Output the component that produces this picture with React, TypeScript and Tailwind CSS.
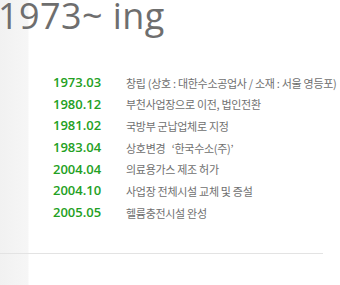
const HISTORY = [
  { date: '1973.03', text: '창립 (상호 : 대한수소공업사 / 소재 : 서울 영등포)' },
  { date: '1980.12', text: '부천사업장으로 이전, 법인전환' },
  { date: '1981.02', text: '국방부 군납업체로 지정' },
  { date: '1983.04', text: '상호변경\u00a0\u00a0 ‘한국수소(주)’' },
  { date: '2004.04', text: '의료용가스 제조 허가' },
  { date: '2004.10', text: '사업장 전체시설 교체 및 증설' },
  { date: '2005.05', text: '헬륨충전시설 완성' },
];

export default function App() {
  return (
    <div className="w-[340px] h-[285px] overflow-hidden bg-[linear-gradient(to_right,#f1f1f1_0px,#f6f6f6_28px,#ffffff_29px)]">
      {/* Title */}
      <h1 className="h-[64px] -ml-[2px] text-[36px] leading-[32px] tracking-[0.4px] text-[#6e6e6e] font-['Open_Sans',sans-serif] font-normal whitespace-nowrap">
        1973~ ing
      </h1>

      {/* History list */}
      <ul className="pl-[53px] mt-[8px]">
        {HISTORY.map(h => (
          <li key={h.date} className="flex items-center h-[21.67px]">
            <span className="w-[73px] shrink-0 text-[13px] font-semibold text-[#23a023] font-['Open_Sans',sans-serif]">
              {h.date}
            </span>
            <span className="text-[11px] text-[#707070] font-['Noto_Sans_CJK_KR',sans-serif] tracking-[-0.3px] whitespace-nowrap">
              {h.text}
            </span>
          </li>
        ))}
      </ul>

      {/* Bottom divider */}
      <div className="mt-[29px] w-[323px] border-t border-[#e3e3e3]" />
    </div>
  );
}
